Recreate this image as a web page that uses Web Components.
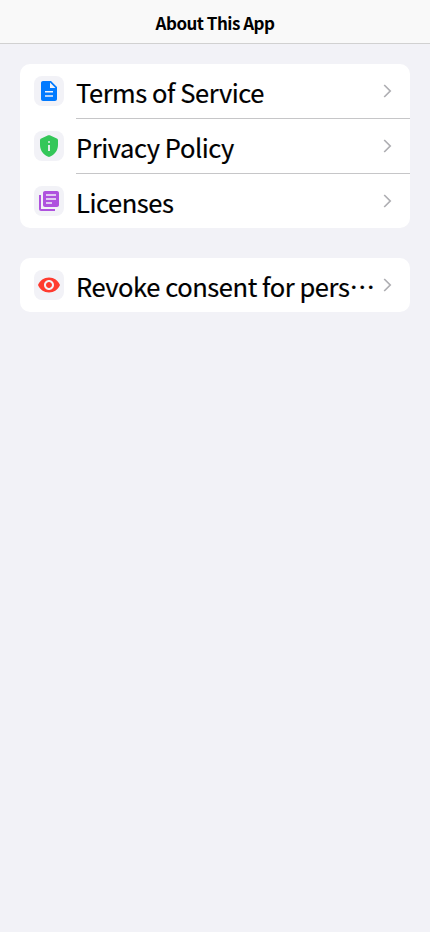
<!DOCTYPE html>
<html lang="en">
<head>
<meta charset="utf-8">
<meta name="viewport" content="width=device-width, initial-scale=1">
<title>About This App</title>
<style>
html, body { margin: 0; height: 100%; }
body { background: #f2f2f7; color: #000; font-family: "Noto Sans CJK JP", sans-serif; overflow: hidden; }
</style>
</head>
<body>
<about-page></about-page>
<script>
const ICONS = {
  terms: ['#007aff', 'M14 2H6c-1.1 0-1.99.9-1.99 2L4 20c0 1.1.89 2 1.99 2H18c1.1 0 2-.9 2-2V8l-6-6zm2 15.8H8v-1.6h8v1.6zm0-4.2H8V12h8v1.6zM13 9V3.5L18.5 9H13z'],
  privacy: ['#34c759', 'M4.19 4.47C3.47 4.79 3 5.51 3 6.3V11c0 5.55 3.84 10.74 9 12 5.16-1.26 9-6.45 9-12V6.3c0-.79-.47-1.51-1.19-1.83l-7-3.11c-.52-.23-1.11-.23-1.62 0zM11.1 7.2h1.8v1.6h-1.8V7.2zm0 3.8h1.8v6h-1.8v-6z'],
  licenses: ['#af52de', 'M4 6H2v14c0 1.1.9 2 2 2h14v-2H4V6zm16-4H8c-1.1 0-2 .9-2 2v12c0 1.1.9 2 2 2h12c1.1 0 2-.9 2-2V4c0-1.1-.9-2-2-2zm-1 8.8H9V9.2h10v1.6zm-4 4H9v-1.6h6v1.6zm4-8H9V5.2h10v1.6z'],
  eye: ['#ff3b30', 'M12 4.5C7 4.5 2.73 7.61 1 12c1.73 4.39 6 7.5 11 7.5s9.27-3.11 11-7.5c-1.73-4.39-6-7.5-11-7.5zM12 17c-2.76 0-5-2.24-5-5s2.24-5 5-5 5 2.24 5 5-2.24 5-5 5zm0-8c-1.66 0-3 1.34-3 3s1.34 3 3 3 3-1.34 3-3-1.34-3-3-3z']
};

class NavBar extends HTMLElement {
  constructor() {
    super();
    this.attachShadow({ mode: 'open' }).innerHTML = `
      <style>
        :host { display: flex; align-items: center; justify-content: center; box-sizing: border-box;
          height: 44px; padding-top: 3px; background: #f9f9f9; border-bottom: 1px solid #d1d1d1; }
        h1 { margin: 0; font-size: 17px; line-height: 24px; font-weight: 700; letter-spacing: -0.52px; }
      </style>
      <h1><slot></slot></h1>`;
  }
}
customElements.define('nav-bar', NavBar);

class ListGroup extends HTMLElement {
  constructor() {
    super();
    this.attachShadow({ mode: 'open' }).innerHTML = `
      <style>
        :host { display: block; background: #fff; border-radius: 10px; overflow: hidden; }
      </style>
      <slot></slot>`;
  }
}
customElements.define('list-group', ListGroup);

class ListRow extends HTMLElement {
  connectedCallback() {
    const [color, path] = ICONS[this.getAttribute('icon')];
    this.attachShadow({ mode: 'open' }).innerHTML = `
      <style>
        :host { display: flex; height: 55px; padding-left: 14px; gap: 12px; }
        :host(:last-child) { height: 54px; }
        .tile { flex: none; display: grid; place-items: center; width: 30px; height: 30px;
          margin-top: 12px; border-radius: 8px; background: #f2f2f7; }
        .body { flex: 1; min-width: 0; display: flex; box-sizing: border-box;
          padding-right: 14px; border-bottom: 1px solid #c6c6c8; }
        :host(:last-child) .body { border-bottom: 0; }
        .label { flex: 1; min-width: 0; margin-top: 8px; font-size: 25.5px; line-height: 40px;
          letter-spacing: -0.43px; -webkit-text-stroke: 0.2px currentColor;
          white-space: nowrap; }
        .chevron { flex: none; margin: 19px 0 0 0; }
        svg { display: block; }
      </style>
      <span class="tile"><svg width="24" height="24" viewBox="0 0 24 24" fill="${color}"><path d="${path}"/></svg></span>
      <div class="body">
        <span class="label"><slot></slot></span>
        <svg class="chevron" width="16" height="16" viewBox="0 0 16 16" fill="none" stroke="#aeaeb2" stroke-width="1.7"><path d="M4.2 2l6 6-6 6"/></svg>
      </div>`;
  }
}
customElements.define('list-row', ListRow);

class AboutPage extends HTMLElement {
  constructor() {
    super();
    this.attachShadow({ mode: 'open' }).innerHTML = `
      <style>
        :host { display: block; }
        main { display: flex; flex-direction: column; gap: 30px; padding: 20px; }
      </style>
      <nav-bar>About This App</nav-bar>
      <main>
        <list-group>
          <list-row icon="terms">Terms of Service</list-row>
          <list-row icon="privacy">Privacy Policy</list-row>
          <list-row icon="licenses">Licenses</list-row>
        </list-group>
        <list-group>
          <list-row icon="eye" lang="ja">Revoke consent for pers…</list-row>
        </list-group>
      </main>`;
  }
}
customElements.define('about-page', AboutPage);
</script>
</body>
</html>
